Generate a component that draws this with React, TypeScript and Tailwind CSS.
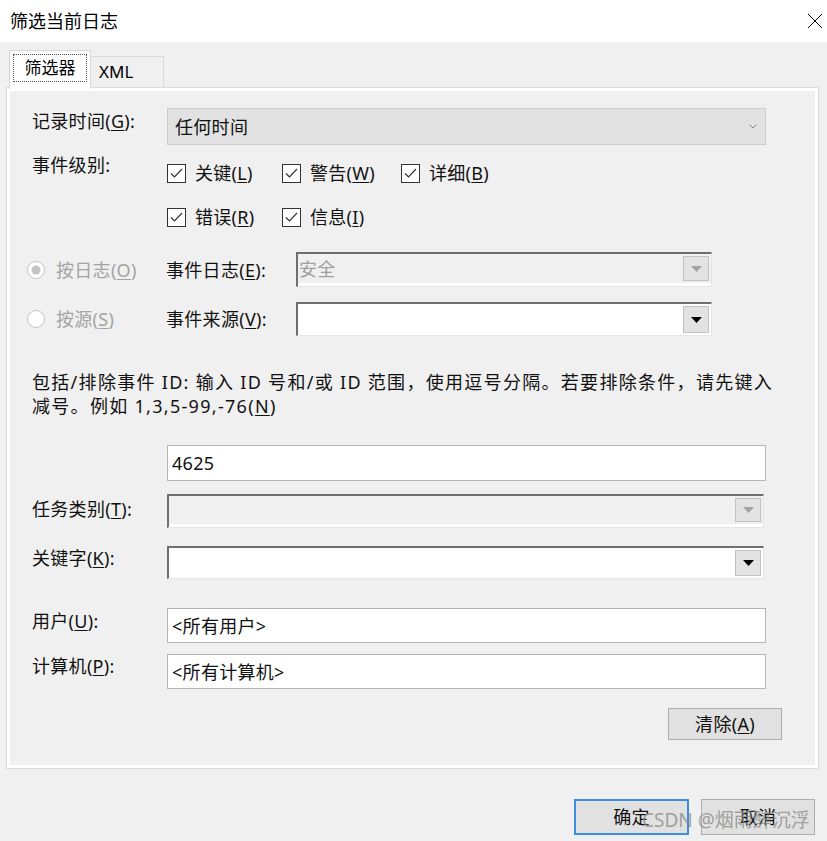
import React from "react";

const font = "font-['Noto_Sans','Noto_Sans_CJK_SC',sans-serif]";

function Acc({ k }: { k: string }) {
  return (
    <span>
      (<u className="underline-offset-2">{k}</u>)
    </span>
  );
}

function Check({ label, k, w }: { label: string; k: string; w: string }) {
  return (
    <div className={`flex items-center gap-[9px] h-[24px] ${w}`}>
      <svg width="19" height="19" viewBox="0 0 19 19" className="shrink-0">
        <rect x="0.5" y="0.5" width="18" height="18" fill="#fff" stroke="#333" />
        <polyline points="4,9.5 7.5,13 15,5" fill="none" stroke="#333" strokeWidth="1.2" />
      </svg>
      <span>
        {label}
        <Acc k={k} />
      </span>
    </div>
  );
}

function Radio({ checked, label, k }: { checked?: boolean; label: string; k: string }) {
  return (
    <div className="flex items-center gap-[11px] w-[139px] -ml-[5px]">
      <svg width="18" height="18" viewBox="0 0 18 18" className="shrink-0">
        <circle cx="9" cy="9" r="8.5" fill="#fff" stroke="#c4c4c4" />
        {checked && <circle cx="9" cy="9" r="4.5" fill="#c4c4c4" />}
      </svg>
      <span className="text-[#a3a3a3]">
        {label}
        <Acc k={k} />
      </span>
    </div>
  );
}

function Combo({ w, h, disabled, value }: { w: string; h: string; disabled?: boolean; value?: string }) {
  return (
    <div
      className={`${w} ${h} border-t-2 border-l-2 border-[#6f6f6f] border-r border-b border-r-[#e6e6e6] border-b-[#e6e6e6] flex`}
    >
      <div
        className={`flex-1 flex items-center justify-between ${
          disabled ? "bg-[#f0f0f0] border-b-[3px] border-white" : "bg-white"
        }`}
      >
        <span className="pl-[1px] text-[#a0a0a0]">{value}</span>
        <div className="self-stretch py-[2px] pr-[2px] flex">
          <div className="w-[26px] bg-[#e3e3e3] border border-[#c2c2c2] flex items-center justify-center">
            <svg width="11" height="6" viewBox="0 0 11 6">
              <polygon points="0,0 11,0 5.5,6" fill={disabled ? "#a3a3a3" : "#000"} />
            </svg>
          </div>
        </div>
      </div>
    </div>
  );
}

function TextBox({ value, h }: { value: string; h: string }) {
  return (
    <div className={`w-[599px] ${h} bg-white border border-[#b4b4b4] flex items-center pl-[4px]`}>
      {value}
    </div>
  );
}

function Button({ children, primary, w }: { children: React.ReactNode; primary?: boolean; w: string }) {
  return (
    <div
      className={`${w} h-[36px] bg-[#e1e1e1] flex items-center justify-center ${
        primary ? "border-2 border-[#3d8ee0]" : "border border-[#adadad]"
      }`}
    >
      {children}
    </div>
  );
}

export default function App() {
  return (
    <div
      className={`w-[827px] h-[841px] bg-[#f0f0f0] relative overflow-hidden leading-[24px] text-[18px] tracking-[0.3px] text-[#111] ${font}`}
    >
      {/* Title bar */}
      <div className="h-[42px] bg-white flex items-center justify-between pl-[10px] pr-[4px]">
        <span className="text-[18px] tracking-normal text-black">筛选当前日志</span>
        <svg width="16" height="16" viewBox="0 0 16 16">
          <path d="M1 1 L15 15 M15 1 L1 15" stroke="#000" strokeWidth="1" />
        </svg>
      </div>

      {/* Tabs */}
      <div className="h-[45px] pl-[9px] flex items-end">
        <div className="relative z-10 -mb-[2px] h-[39px] w-[82px] bg-white border border-b-0 border-[#d9d9d9] p-[3px] flex">
          <div className="flex-1 border border-dotted border-[#555] flex items-center justify-center text-black mb-[4px] text-[17px] tracking-normal">
            筛选器
          </div>
        </div>
        <div className="h-[31px] w-[73px] border border-b-0 border-l-0 border-[#d9d9d9] flex items-center pl-[8px] text-black text-[17px] tracking-normal">
          XML
        </div>
      </div>

      {/* Panel */}
      <div className="ml-[6px] w-[813px] border border-[#dcdcdc]">
        <div className="border-[3px] border-white pl-[22px] pb-[25px]">
          {/* Logged */}
          <div className="flex items-start mt-[17px]">
            <div className="w-[135px] pt-[1px]">
              记录时间<Acc k="G" />:
            </div>
            <div className="w-[599px] h-[37px] bg-[#e2e2e2] border border-[#cccccc] flex items-center justify-between pl-[7px] pr-[8px]">
              <span>任何时间</span>
              <svg width="8" height="5" viewBox="0 0 8 5">
                <polyline points="0.5,0.5 4,4 7.5,0.5" fill="none" stroke="#888" />
              </svg>
            </div>
          </div>

          {/* Event level */}
          <div className="flex items-start mt-[8px]">
            <div className="w-[135px]">事件级别:</div>
            <div className="pt-[8px] flex flex-col gap-[20px]">
              <div className="flex">
                <Check label="关键" k="L" w="w-[115px]" />
                <Check label="警告" k="W" w="w-[119px]" />
                <Check label="详细" k="B" w="w-[110px]" />
              </div>
              <div className="flex">
                <Check label="错误" k="R" w="w-[115px]" />
                <Check label="信息" k="I" w="w-[110px]" />
              </div>
            </div>
          </div>

          {/* By log */}
          <div className="flex items-center mt-[23px]">
            <Radio checked label="按日志" k="O" />
            <div className="w-[130px]">
              事件日志<Acc k="E" />:
            </div>
            <Combo w="w-[416px]" h="h-[35px]" disabled value="安全" />
          </div>

          {/* By source */}
          <div className="flex items-center mt-[15px]">
            <Radio label="按源" k="S" />
            <div className="w-[130px]">
              事件来源<Acc k="V" />:
            </div>
            <Combo w="w-[416px]" h="h-[34px]" />
          </div>

          {/* Description */}
          <div className="mt-[34px] whitespace-nowrap tracking-[1.3px]">
            包括/排除事件 ID: 输入 ID 号和/或 ID 范围，使用逗号分隔。若要排除条件，请先键入
            <br />
            减号。例如 1,3,5-99,-76<Acc k="N" />
          </div>

          <div className="flex mt-[27px]">
            <div className="w-[135px]" />
            <TextBox value="4625" h="h-[36px]" />
          </div>

          {/* Task category */}
          <div className="flex items-start mt-[13px]">
            <div className="w-[135px] pt-[3px]">
              任务类别<Acc k="T" />:
            </div>
            <Combo w="w-[597px]" h="h-[34px]" disabled />
          </div>

          {/* Keywords */}
          <div className="flex items-start mt-[18px]">
            <div className="w-[135px]">
              关键字<Acc k="K" />:
            </div>
            <Combo w="w-[597px]" h="h-[33px]" />
          </div>

          {/* User */}
          <div className="flex items-start mt-[29px]">
            <div className="w-[135px] pt-[1px]">
              用户<Acc k="U" />:
            </div>
            <TextBox value="<所有用户>" h="h-[35px]" />
          </div>

          {/* Computer */}
          <div className="flex items-start mt-[11px]">
            <div className="w-[135px]">
              计算机<Acc k="P" />:
            </div>
            <TextBox value="<所有计算机>" h="h-[35px]" />
          </div>

          <div className="flex justify-end pr-[33px] mt-[19px]">
            <div className="w-[114px] h-[32px] bg-[#e1e1e1] border border-[#adadad] flex items-center justify-center">
              清除<Acc k="A" />
            </div>
          </div>
        </div>
      </div>

      {/* Footer buttons */}
      <div className="flex justify-end gap-[12px] pr-[12px] mt-[30px]">
        <Button primary w="w-[115px]">确定</Button>
        <Button w="w-[114px]">取消</Button>
      </div>

      {/* Watermark */}
      <div className="absolute left-[642px] top-[808px] text-[19px] tracking-normal text-[#8c8c8c]/80 pointer-events-none">
        CSDN @烟雨醉沉浮
      </div>
    </div>
  );
}
